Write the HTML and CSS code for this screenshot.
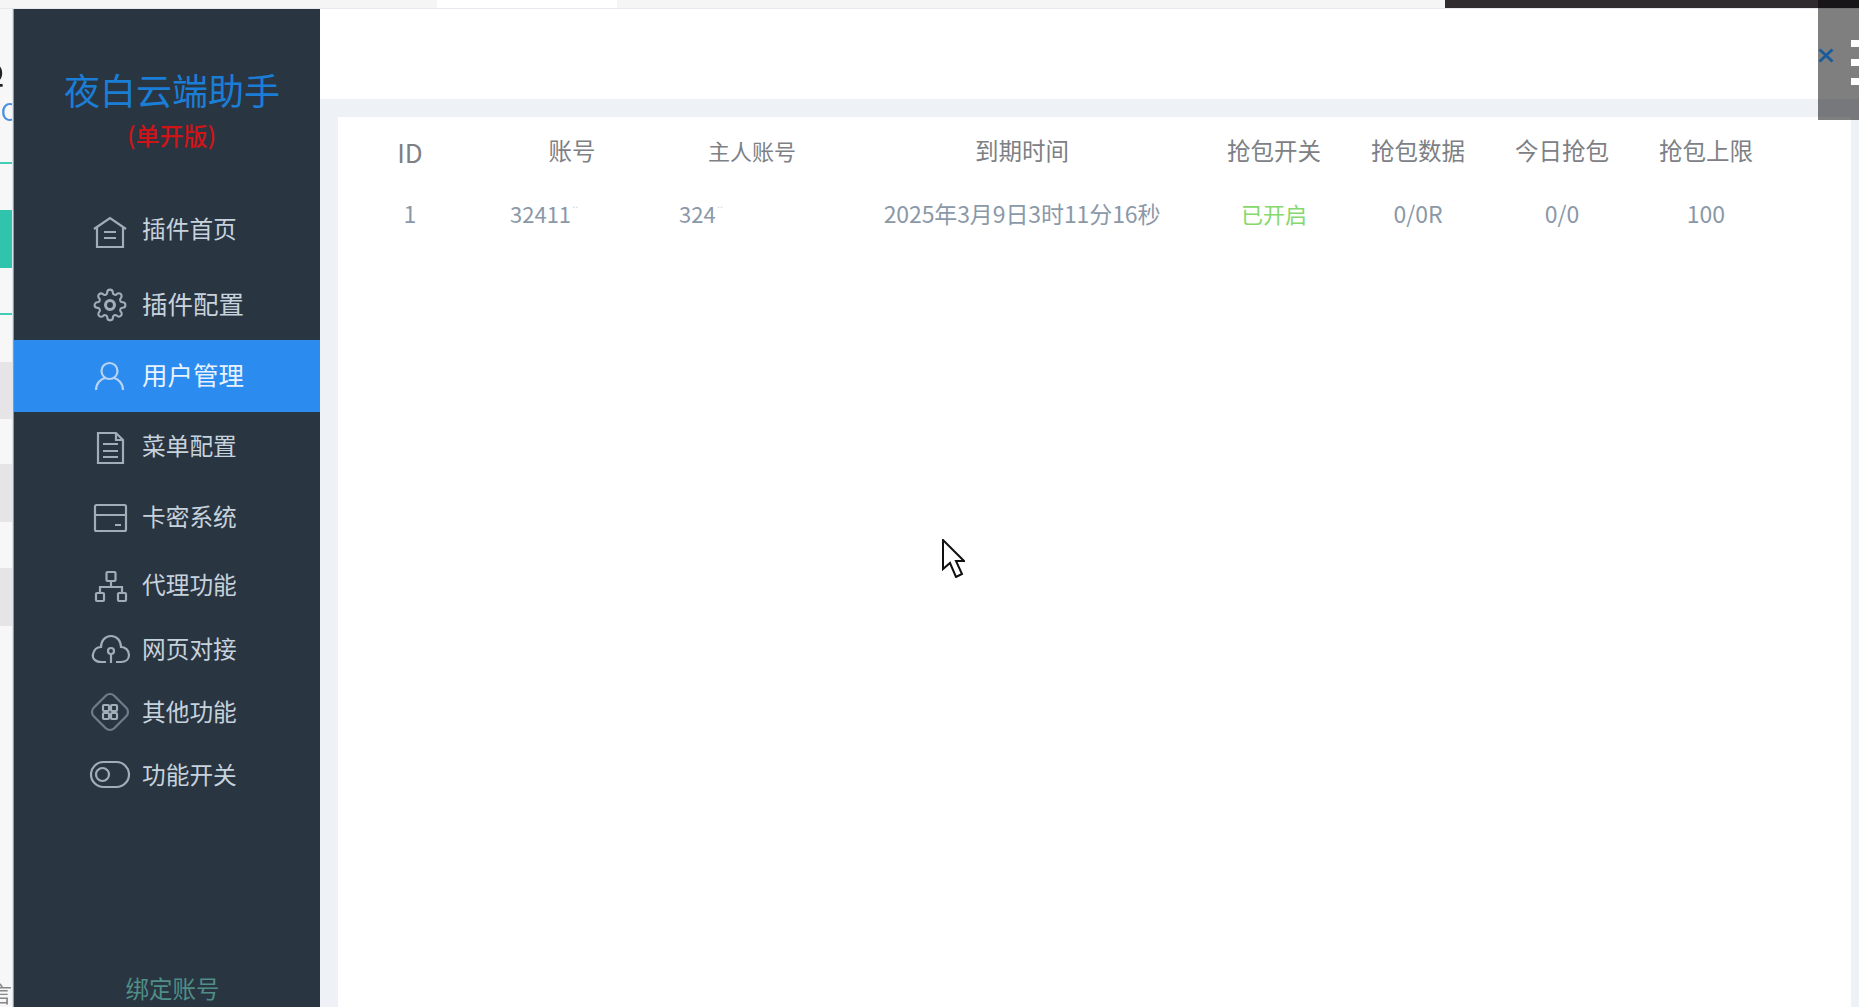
FILE: index.html
```html
<!DOCTYPE html>
<html lang="zh-CN">
<head>
<meta charset="utf-8">
<title>夜白云端助手</title>
<link rel="stylesheet" href="styles.css">
</head>
<body>
<div class="page">
  <div class="topbar">
    <div class="tab tab-left"></div>
    <div class="tab tab-active"></div>
    <div class="tab tab-rest"></div>
    <div class="tab tab-dark"></div>
  </div>
  <div class="shell">
    <div class="behind">
      <div class="behind-q">Q</div>
      <div class="behind-c">.C</div>
      <div class="behind-line line-a"></div>
      <div class="behind-block"></div>
      <div class="behind-line line-b"></div>
      <div class="behind-band band-a"></div>
      <div class="behind-band band-b"></div>
      <div class="behind-band band-c"></div>
      <div class="behind-foot">言</div>
    </div>
    <aside class="sidebar">
      <div class="brand">
        <div class="brand-name">夜白云端助手</div>
        <div class="brand-sub">(单开版)</div>
      </div>
      <nav class="menu">
        <a class="item">
          <svg class="ico" viewBox="0 0 40 40"><path d="M4 19 20 8l16 11M7 17v20h26V17M14 22h12M14 28h12"/></svg>
          <span>插件首页</span>
        </a>
        <a class="item wide">
          <svg class="ico" viewBox="0 0 40 40"><g transform="translate(3.2 3.2) scale(1.4)"><circle cx="12" cy="12" r="3.2"/><path d="M19.4 15a1.65 1.65 0 0 0 .33 1.82l.06.06a2 2 0 0 1 0 2.83 2 2 0 0 1-2.83 0l-.06-.06a1.65 1.65 0 0 0-1.82-.33 1.65 1.65 0 0 0-1 1.51V21a2 2 0 0 1-2 2 2 2 0 0 1-2-2v-.09A1.65 1.65 0 0 0 9 19.4a1.65 1.65 0 0 0-1.82.33l-.06.06a2 2 0 0 1-2.83 0 2 2 0 0 1 0-2.83l.06-.06a1.65 1.65 0 0 0 .33-1.82 1.65 1.65 0 0 0-1.51-1H3a2 2 0 0 1-2-2 2 2 0 0 1 2-2h.09A1.65 1.65 0 0 0 4.6 9a1.65 1.65 0 0 0-.33-1.82l-.06-.06a2 2 0 0 1 0-2.83 2 2 0 0 1 2.83 0l.06.06a1.65 1.65 0 0 0 1.82.33H9a1.65 1.65 0 0 0 1-1.51V3a2 2 0 0 1 2-2 2 2 0 0 1 2 2v.09a1.65 1.65 0 0 0 1 1.51 1.65 1.65 0 0 0 1.82-.33l.06-.06a2 2 0 0 1 2.83 0 2 2 0 0 1 0 2.83l-.06.06a1.65 1.65 0 0 0-.33 1.82V9a1.65 1.65 0 0 0 1.51 1H21a2 2 0 0 1 2 2 2 2 0 0 1-2 2h-.09a1.65 1.65 0 0 0-1.51 1z" stroke-width="1.500"/></g></svg>
          <span>插件配置</span>
        </a>
        <a class="item wide active">
          <svg class="ico" viewBox="0 0 40 40"><circle cx="19.500" cy="15" r="8"/><path d="M6 34c0-7 5-11 9-12M33 34c0-7-5-11-9-12"/></svg>
          <span>用户管理</span>
        </a>
        <a class="item">
          <svg class="ico" viewBox="0 0 40 40"><path d="M8 7h18l7 7v23H8zM26 7v7h7M13 18h15M13 25h15M13 31h15"/></svg>
          <span>菜单配置</span>
        </a>
        <a class="item">
          <svg class="ico" viewBox="0 0 40 40"><rect x="5" y="8" width="31" height="26" rx="1.500"/><path d="M5 18h31M25 28h6"/></svg>
          <span>卡密系统</span>
        </a>
        <a class="item">
          <svg class="ico" viewBox="0 0 40 40"><rect x="16.500" y="6" width="9" height="9" rx="1"/><rect x="6" y="27" width="8" height="8" rx="1"/><rect x="28" y="27" width="8" height="8" rx="1"/><path d="M21 15v6M10 27v-6h22v6"/></svg>
          <span>代理功能</span>
        </a>
        <a class="item">
          <svg class="ico" viewBox="0 0 40 40"><path d="M16 33h-5c-6 0-9-4-8-8 1-4 4-7 8-7 0-6 4-11 10-11s10 5 10 11c4 0 8 3 8 8 0 4-3 7-8 7h-5"/><circle cx="21" cy="22" r="3"/><path d="M21 25v9"/></svg>
          <span>网页对接</span>
        </a>
        <a class="item">
          <svg class="ico" viewBox="0 0 40 40"><rect class="dim" x="5.500" y="5.500" width="29" height="29" rx="6" transform="rotate(45 20 20)"/><rect x="13" y="13" width="6" height="6" rx="1"/><rect x="21" y="13" width="6" height="6" rx="1"/><rect x="13" y="21" width="6" height="6" rx="1"/><rect x="21" y="21" width="6" height="6" rx="1"/></svg>
          <span>其他功能</span>
        </a>
        <a class="item">
          <svg class="ico" viewBox="0 0 40 40"><rect x="1" y="7" width="38" height="25" rx="12.500"/><circle cx="12.500" cy="19.500" r="6.500"/></svg>
          <span>功能开关</span>
        </a>
      </nav>
      <div class="bind">绑定账号</div>
    </aside>
    <main class="main">
      <header class="main-head"></header>
      <section class="content">
        <table class="grid">
          <colgroup>
            <col class="c-n"><col class="c-m"><col class="c-m"><col class="c-l"><col class="c-n"><col class="c-n"><col class="c-n"><col class="c-n">
          </colgroup>
          <thead>
            <tr><th class="th-id">ID</th><th>账号</th><th class="th-tight">主人账号</th><th>到期时间</th><th>抢包开关</th><th>抢包数据</th><th>今日抢包</th><th>抢包上限</th></tr>
          </thead>
          <tbody>
            <tr>
              <td>1</td>
              <td class="mask mask-a">32411<span class="fade">¨</span></td>
              <td class="mask mask-b">324<span class="fade">¨</span></td>
              <td class="date">2025年3月9日3时11分16秒</td>
              <td class="on">已开启</td>
              <td>0/0R</td>
              <td>0/0</td>
              <td>100</td>
            </tr>
          </tbody>
        </table>
      </section>
    </main>
  </div>
  <div class="shade">
    <svg class="shade-x" viewBox="0 0 16 15"><path d="M1.500 1.500l13 12M14.500 1.500l-13 12"/></svg>
  </div>
  <div class="handle"><i></i><i></i><i></i></div>
  <svg class="cursor" viewBox="0 0 23 39"><path d="M1 1v29l7-6 6 14 6-3-6-13h8z"/></svg>
</div>
</body>
</html>
```
FILE: styles.css
```css
* { box-sizing: border-box; }
html, body { margin: 0; height: 100%; overflow: hidden; background: #fff; }
body { font-family: "Noto Sans CJK SC", "Noto Sans", sans-serif; }

.page { position: relative; height: 1007px; display: flex; flex-direction: column; overflow: hidden; filter: blur(0.55px); }

.topbar { height: 9px; display: flex; flex: none; border-bottom: 1px solid #e6e8ee; background: #f5f5f5; }
.tab-left { width: 437px; }
.tab-active { width: 180px; background: #fff; }
.tab-rest { flex: 1; }
.tab-dark { width: 414px; background: #2f2b2e; }

.shell { flex: 1; display: flex; min-height: 0; }

.behind { width: 13px; flex: none; background: #f7f7f7; display: flex; flex-direction: column; overflow: hidden; border-right: 1px solid #dfe3ea; }
.behind-q { height: 33px; margin-top: 46px; margin-left: -15px; font-size: 24px; line-height: 33px; font-weight: 700; color: #222; }
.behind-c { height: 34px; margin-top: 6px; margin-left: -6px; font-size: 24px; line-height: 34px; color: #4a8fe0; white-space: nowrap; }
.behind-line { height: 2px; width: 12px; background: #41cdb6; flex: none; }
.line-a { margin-top: 34px; }
.line-b { margin-top: 45px; }
.behind-block { height: 58px; width: 12px; margin-top: 46px; background: #2fc4ab; flex: none; }
.behind-band { width: 12px; height: 58px; background: #e6e4e6; flex: none; }
.band-a { margin-top: 47px; height: 57px; }
.band-b { margin-top: 45px; }
.band-c { margin-top: 46px; }
.behind-foot { margin-top: auto; margin-bottom: 3px; margin-left: -10px; font-size: 22px; line-height: 24px; color: #888; }

.sidebar { width: 307px; flex: none; display: flex; flex-direction: column; background: #2a3542; border-left: 1px solid #8f98a3; }

.brand { height: 180px; padding-top: 53px; text-align: center; }
.brand-name { font-size: 36px; line-height: 54px; color: #1b7ed6; padding-left: 10px; white-space: nowrap; }
.brand-sub { font-size: 24px; line-height: 30px; margin-top: 4px; color: #cf1418; font-weight: 500; padding-left: 9px; }

.menu { display: flex; flex-direction: column; }
.item { display: flex; align-items: center; gap: 12px; padding-left: 76px; color: #c6d2dc; font-size: 23.700px; height: 70px; }
.item span { margin-bottom: 3px; }
.item:nth-child(1) { height: 81px; }
.item:nth-child(3) { height: 72px; }
.item:nth-child(4) { height: 68px; }
.item:nth-child(5) { height: 74px; }
.item:nth-child(6) { height: 63px; }
.item:nth-child(7) { height: 64px; }
.item:nth-child(8) { height: 62px; }
.item:nth-child(9) { height: 64px; }
.item.wide { font-size: 25.500px; }
.item.wide span { margin-bottom: 5px; }
.item.active { background: #2b8bef; color: #e8f2fd; }

.ico { width: 40px; height: 40px; flex: none; fill: none; stroke: #a2adb8; stroke-width: 2.200; overflow: visible; }
.ico .dim { stroke: #6f7c89; }
.active .ico { stroke: #b9d3f2; }

.bind { margin-top: auto; margin-bottom: 5px; height: 28px; line-height: 28px; text-align: center; font-size: 23.500px; color: #4f8f88; padding-left: 11px; }

.main { flex: 1; min-width: 0; display: flex; flex-direction: column; background: #eef1f6; }
.main-head { height: 90px; flex: none; background: #fff; }
.content { flex: 1; margin: 18px 8px 0 18px; background: #fff; }

.grid { table-layout: fixed; width: 1440px; border-collapse: collapse; }
.c-n { width: 144px; }
.c-m { width: 180px; }
.c-l { width: 360px; }
.grid th { height: 66px; padding: 0; font-size: 23.500px; font-weight: 400; color: #7d8084; text-align: center; white-space: nowrap; }
.grid th.th-id { font-size: 26px; padding-top: 3px; }
.grid th.th-tight { font-size: 22px; }
.grid td { height: 59px; padding: 0; font-size: 23px; color: #8b98a8; text-align: center; white-space: nowrap; }
.grid td.date { letter-spacing: -0.100px; }
.grid td.mask { text-align: left; font-size: 22px; }
.grid td.mask-a { padding-left: 28px; }
.grid td.mask-b { padding-left: 17px; }
.grid td.on { color: #86d86c; font-size: 22px; }
.fade { color: #d5dae0; font-size: 14px; vertical-align: 6px; }

.shade { position: absolute; top: 0; right: 0; width: 41px; height: 120px; background: rgba(0, 0, 0, 0.5); }
.shade-x { position: absolute; left: 0; top: 48px; width: 16px; height: 15px; fill: none; stroke: #1a5b9a; stroke-width: 3; }

.handle { position: absolute; top: 40px; right: 0; width: 8px; display: flex; flex-direction: column; gap: 12px; }
.handle i { display: block; height: 7px; background: #fff; }

.cursor { position: absolute; left: 942px; top: 539px; width: 23px; height: 39px; fill: #fff; stroke: #111; stroke-width: 2; }
```
